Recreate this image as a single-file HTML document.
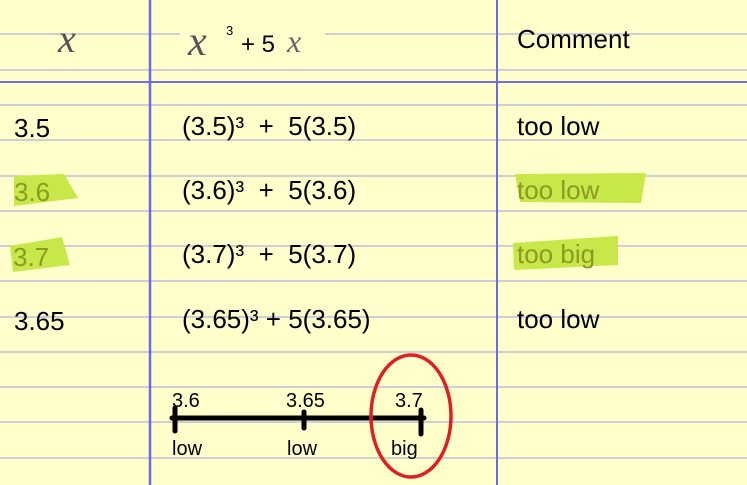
<!DOCTYPE html>
<html><head><meta charset="utf-8"><style>
html,body{margin:0;padding:0;background:#ffffcc;}
svg{display:block}
text{font-family:"Liberation Sans",sans-serif;font-size:26px;fill:#000;white-space:pre}
.s{font-family:"Liberation Serif",serif;font-style:italic;fill:#555}
</style></head><body>
<svg width="747" height="485" viewBox="0 0 747 485" xmlns="http://www.w3.org/2000/svg" xml:space="preserve">
<rect width="747" height="485" fill="#ffffcc"/>
<g stroke="#b0b0dc" stroke-width="1.3">
<line x1="0" y1="34" x2="747" y2="34"/>
<line x1="0" y1="70" x2="747" y2="70"/>
<line x1="0" y1="105" x2="747" y2="105"/>
<line x1="0" y1="140" x2="747" y2="140"/>
<line x1="0" y1="176" x2="747" y2="176"/>
<line x1="0" y1="211" x2="747" y2="211"/>
<line x1="0" y1="246" x2="747" y2="246"/>
<line x1="0" y1="281" x2="747" y2="281"/>
<line x1="0" y1="317" x2="747" y2="317"/>
<line x1="0" y1="352" x2="747" y2="352"/>
<line x1="0" y1="387" x2="747" y2="387"/>
<line x1="0" y1="422" x2="747" y2="422"/>
<line x1="0" y1="458" x2="747" y2="458"/>
</g>
<rect x="180" y="28" width="145" height="12" fill="#ffffcc"/>
<line x1="0" y1="82" x2="747" y2="82" stroke="#7070e0" stroke-width="2"/>
<line x1="150" y1="0" x2="150" y2="485" stroke="#6a6ae6" stroke-width="2.5"/>
<line x1="497" y1="0" x2="497" y2="485" stroke="#6a6ae6" stroke-width="2"/>
<polygon points="14,176 64,174 78,198 14,206" fill="#c8e84a"/>
<polygon points="10,246 62,237 70,265 13,272" fill="#c8e84a"/>
<polygon points="515,174 646,173 641,203 520,202" fill="#c8e84a"/>
<polygon points="513,243 618,236 618,265 514,270" fill="#c8e84a"/>
<text x="58" y="52" class="s" style="font-size:40px">x</text>
<text x="188" y="55" class="s" style="font-size:42px">x</text>
<text x="226" y="35" style="font-size:13px">3</text>
<text x="241" y="52" style="font-size:24px">+ 5</text>
<text x="287" y="52" class="s" style="font-size:32px;fill:#666">x</text>
<text x="517" y="48">Comment</text>
<text x="14" y="137">3.5</text>
<text x="14" y="201" style="fill:#8a9a20">3.6</text>
<text x="13" y="266" style="fill:#8a9a20">3.7</text>
<text x="14" y="330">3.65</text>
<text x="182" y="135">(3.5)³  +  5(3.5)</text>
<text x="182" y="199">(3.6)³  +  5(3.6)</text>
<text x="182" y="263">(3.7)³  +  5(3.7)</text>
<text x="182" y="328">(3.65)³ + 5(3.65)</text>
<text x="517" y="135">too low</text>
<text x="517" y="199" style="fill:#8a9a20">too low</text>
<text x="517" y="263" style="fill:#8a9a20">too big</text>
<text x="517" y="328">too low</text>
<line x1="172" y1="418" x2="424" y2="418" stroke="#000" stroke-width="5" stroke-linecap="round"/>
<line x1="175" y1="408" x2="175" y2="431" stroke="#000" stroke-width="5" stroke-linecap="round"/>
<line x1="304" y1="412" x2="304" y2="428" stroke="#000" stroke-width="5" stroke-linecap="round"/>
<line x1="421" y1="410" x2="421" y2="434" stroke="#000" stroke-width="5" stroke-linecap="round"/>
<text x="172" y="407" style="font-size:20px">3.6</text>
<text x="286" y="407" style="font-size:20px">3.65</text>
<text x="395" y="407" style="font-size:20px">3.7</text>
<text x="172" y="455" style="font-size:20px">low</text>
<text x="287" y="455" style="font-size:20px">low</text>
<text x="391" y="455" style="font-size:20px">big</text>
<ellipse cx="411" cy="416" rx="40" ry="61" fill="none" stroke="#e02020" stroke-width="3.5"/>
</svg>
</body></html>
